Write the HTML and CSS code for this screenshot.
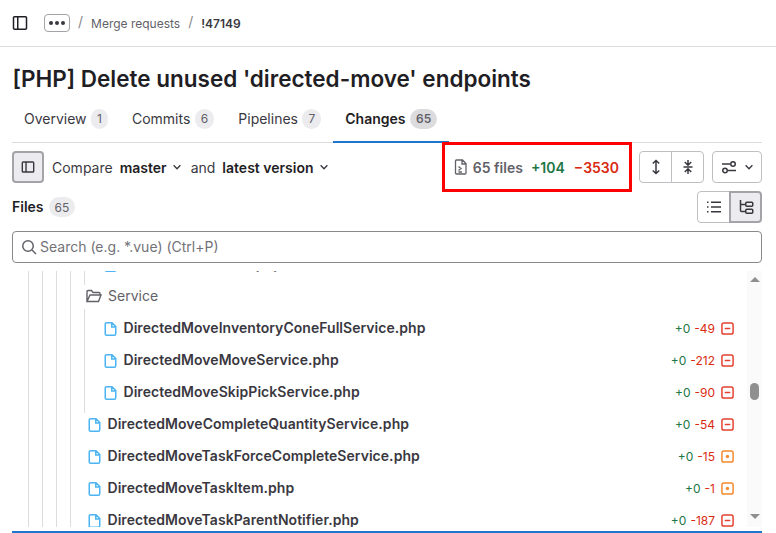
FILE: index.html
```html
<!DOCTYPE html>
<html lang="en">
<head>
    <meta charset="UTF-8">
    <title>[PHP] Delete unused 'directed-move' endpoints</title>
    <link rel="stylesheet" href="styles.css">
</head>
<body>
    <svg class="sprites" width="0" height="0">
        <symbol id="file" viewBox="0 0 16 16"><path fill="none" stroke="currentColor" stroke-width="1.5" d="M3.5 1.750h5.500l3.750 3.750v7.250a1.500 1.500 0 0 1-1.500 1.500H3.500a1.250 1.250 0 0 1-1.250-1.500V3a1.250 1.250 0 0 1 1.250-1.250zM8.750 1.750V6h4"/></symbol>
        <symbol id="chev" viewBox="0 0 16 16"><path fill="none" stroke="currentColor" stroke-width="1.800" d="M3.500 5.750L8 10.250l4.500-4.500"/></symbol>
        <symbol id="deleted" viewBox="0 0 14 14"><rect x="1" y="1" width="12" height="12" rx="2" fill="none" stroke="currentColor" stroke-width="1.600"/><path stroke="currentColor" stroke-width="1.600" d="M4 7h6"/></symbol>
        <symbol id="modified" viewBox="0 0 14 14"><rect x="1" y="1" width="12" height="12" rx="2" fill="none" stroke="currentColor" stroke-width="1.600"/><circle cx="7" cy="7" r="1.800" fill="currentColor"/></symbol>
    </svg>

    <header class="topbar">
        <svg class="icon-sidebar" width="16" height="16" viewBox="0 0 16 16"><path fill="none" stroke="#1f1e24" stroke-width="1.500" d="M2.500 1.750h11a1 1 0 0 1 1 1v10.500a1 1 0 0 1-1 1h-11a1 1 0 0 1-1-1V2.750a1 1 0 0 1 1-1zM5.750 1.750v12.500"/></svg>
        <button class="more-btn"><span></span><span></span><span></span></button>
        <span class="sep">/</span>
        <span class="crumb">Merge requests</span>
        <span class="sep">/</span>
        <span class="crumb current">!47149</span>
    </header>

    <h1>[PHP] Delete unused 'directed-move' endpoints</h1>

    <nav class="tabs">
        <div class="tab">Overview <span class="count">1</span></div>
        <div class="tab">Commits <span class="count">6</span></div>
        <div class="tab">Pipelines <span class="count">7</span></div>
        <div class="tab active">Changes <span class="count">65</span></div>
    </nav>

    <div class="toolbar">
        <button class="btn toggle selected">
            <svg width="14" height="14" viewBox="0 0 16 16"><path fill="none" stroke="#3a383f" stroke-width="1.600" d="M2.500 2.250h11a1 1 0 0 1 1 1v9.500a1 1 0 0 1-1 1h-11a1 1 0 0 1-1-1v-9.500a1 1 0 0 1 1-1zM5.750 2.250v11.500"/></svg>
        </button>
        <span class="compare">Compare</span>
        <span class="version">master <svg width="12" height="12"><use href="#chev"/></svg></span>
        <span class="compare">and</span>
        <span class="version">latest version <svg width="12" height="12"><use href="#chev"/></svg></span>

        <div class="stats">
            <svg class="stats-icon" width="16" height="16" viewBox="0 0 16 16"><path fill="none" stroke="#626168" stroke-width="1.300" d="M3.500 1h6l3.500 3.500V14a1 1 0 0 1-1 1H3.500a1 1 0 0 1-1-1V2a1 1 0 0 1 1-1zM9 1v4h4M5.500 7.500L8 9.500l-2.500 2M5.500 13H9"/></svg>
            <span class="stats-files">65 files</span>
            <span class="stats-add">+104</span>
            <span class="stats-del">−3530</span>
            <div class="highlight"></div>
        </div>

        <div class="btn-group">
            <button class="btn">
                <svg width="16" height="16" viewBox="0 0 16 16"><path fill="none" stroke="#3a383f" stroke-width="1.500" d="M8 1.500v13M4.750 4.500L8 1.500l3.250 3M4.750 11.500L8 14.500l3.250-3"/></svg>
            </button>
            <button class="btn">
                <svg width="16" height="16" viewBox="0 0 16 16"><path fill="none" stroke="#3a383f" stroke-width="1.500" d="M8 1v4.500M8 10.500V15M4.750 3L8 6.250 11.250 3M4.750 13L8 9.750 11.250 13M3.500 8h9"/></svg>
            </button>
        </div>
        <button class="btn settings">
            <svg width="16" height="16" viewBox="0 0 16 16"><path fill="none" stroke="#3a383f" stroke-width="1.500" d="M1 5h8M15 11.500H7"/><circle cx="12" cy="5" r="2.250" fill="none" stroke="#3a383f" stroke-width="1.500"/><circle cx="4" cy="11.500" r="2.250" fill="none" stroke="#3a383f" stroke-width="1.500"/></svg>
            <svg class="settings-chev" width="12" height="12"><use href="#chev"/></svg>
        </button>
    </div>

    <div class="files-head">
        <span class="files-title">Files</span>
        <span class="count">65</span>
        <div class="view-group">
            <button class="btn">
                <svg width="16" height="16" viewBox="0 0 16 16"><path fill="none" stroke="#3a383f" stroke-width="1.500" d="M5 3.250h10M5 8h10M5 12.750h10M1 3.250h1.500M1 8h1.500M1 12.750h1.500"/></svg>
            </button>
            <button class="btn selected">
                <svg width="16" height="16" viewBox="0 0 16 16"><path fill="none" stroke="#3a383f" stroke-width="1.500" d="M2.500 1v10.500a1 1 0 0 0 1 1H7M2.500 5.500H7"/><rect x="7.750" y="3.250" width="7" height="4" rx="1" fill="none" stroke="#3a383f" stroke-width="1.500"/><rect x="7.750" y="10.250" width="7" height="4" rx="1" fill="none" stroke="#3a383f" stroke-width="1.500"/></svg>
            </button>
        </div>
    </div>

    <div class="search">
        <svg width="16" height="16" viewBox="0 0 16 16"><circle cx="7" cy="7" r="5.250" fill="none" stroke="#626168" stroke-width="1.500"/><path stroke="#626168" stroke-width="1.500" d="M11 11l4 4"/></svg>
        <span class="search-text">Search (e.g. *.vue) (Ctrl+P)</span>
    </div>

    <div class="tree">
        <div class="scroller">
            <div class="guides"><i></i><i></i><i></i><i></i><i class="last"></i></div>
            <div class="rows">
                <div class="row depth-2">
                    <svg class="file-icon" width="16" height="16"><use href="#file"/></svg>
                    <span class="name">DirectedMoveAlert.php</span>
                </div>
                <div class="row folder">
                    <svg width="16" height="16" viewBox="0 0 16 16"><path fill="none" stroke="#626168" stroke-width="1.400" d="M1 13.500V3.500a1 1 0 0 1 1-1h3.500l1.500 2h6a1 1 0 0 1 1 1v1.500M1 13.500h11.500L15 7H4z"/></svg>
                    <span class="folder-name">Service</span>
                </div>
                <div class="row depth-2">
                    <svg class="file-icon" width="16" height="16"><use href="#file"/></svg>
                    <span class="name">DirectedMoveInventoryConeFullService.php</span>
                    <span class="add">+0</span><span class="del">-49</span>
                    <svg class="st-del" width="13" height="13"><use href="#deleted"/></svg>
                </div>
                <div class="row depth-2">
                    <svg class="file-icon" width="16" height="16"><use href="#file"/></svg>
                    <span class="name">DirectedMoveMoveService.php</span>
                    <span class="add">+0</span><span class="del">-212</span>
                    <svg class="st-del" width="13" height="13"><use href="#deleted"/></svg>
                </div>
                <div class="row depth-2">
                    <svg class="file-icon" width="16" height="16"><use href="#file"/></svg>
                    <span class="name">DirectedMoveSkipPickService.php</span>
                    <span class="add">+0</span><span class="del">-90</span>
                    <svg class="st-del" width="13" height="13"><use href="#deleted"/></svg>
                </div>
                <div class="row">
                    <svg class="file-icon" width="16" height="16"><use href="#file"/></svg>
                    <span class="name">DirectedMoveCompleteQuantityService.php</span>
                    <span class="add">+0</span><span class="del">-54</span>
                    <svg class="st-del" width="13" height="13"><use href="#deleted"/></svg>
                </div>
                <div class="row">
                    <svg class="file-icon" width="16" height="16"><use href="#file"/></svg>
                    <span class="name">DirectedMoveTaskForceCompleteService.php</span>
                    <span class="add">+0</span><span class="del">-15</span>
                    <svg class="st-mod" width="13" height="13"><use href="#modified"/></svg>
                </div>
                <div class="row">
                    <svg class="file-icon" width="16" height="16"><use href="#file"/></svg>
                    <span class="name">DirectedMoveTaskItem.php</span>
                    <span class="add">+0</span><span class="del">-1</span>
                    <svg class="st-mod" width="13" height="13"><use href="#modified"/></svg>
                </div>
                <div class="row">
                    <svg class="file-icon" width="16" height="16"><use href="#file"/></svg>
                    <span class="name">DirectedMoveTaskParentNotifier.php</span>
                    <span class="add">+0</span><span class="del">-187</span>
                    <svg class="st-del" width="13" height="13"><use href="#deleted"/></svg>
                </div>
            </div>
            <div class="scrollbar">
                <div class="arrow up"></div>
                <div class="thumb"></div>
                <div class="arrow down"></div>
            </div>
        </div>
    </div>
</body>
</html>
```

FILE: styles.css
```css
* {
    box-sizing: border-box;
}
html, body {
    height: 100%;
}
body {
    margin: 0;
    overflow: hidden;
    background-color: #fff;
    color: #3a383f;
    font-family: Inter, 'Noto Sans', sans-serif;
    font-size: 14px;
}
.sprites {
    position: absolute;
}
button {
    font-family: inherit;
    cursor: pointer;
}

/* top bar */
.topbar {
    display: flex;
    align-items: center;
    height: 47px;
    padding-left: 12px;
    border-bottom: 1px solid #dcdcde;
}
.more-btn {
    display: flex;
    align-items: center;
    justify-content: center;
    gap: 2px;
    width: 26px;
    height: 18px;
    margin-left: 16px;
    padding: 0;
    background: #fff;
    border: 1px solid #a4a3a8;
    border-radius: 4px;
}
.more-btn span {
    width: 4px;
    height: 4px;
    border-radius: 50%;
    background-color: #3a383f;
}
.sep {
    margin: -3px 8px 0;
    color: #89888d;
    font-size: 14px;
}
.crumb {
    color: #626168;
    font-size: 12px;
}
.crumb.current {
    color: #3a383f;
    font-weight: 600;
}

h1 {
    margin: 17px 0 0 12.500px;
    color: #1f1e24;
    font-size: 22.500px;
    font-weight: 600;
    line-height: 30px;
}

/* tabs */
.tabs {
    display: flex;
    height: 43px;
    margin: 6px 14px 0 12px;
    border-bottom: 1px solid #dcdcde;
}
.tab {
    display: flex;
    align-items: center;
    gap: 4.500px;
    height: 43px;
    padding: 0 12px 6px;
    color: #3a383f;
    font-size: 14px;
}
.tab.active {
    font-weight: 600;
    color: #1f1e24;
    border-bottom: 2px solid #1f75cb;
    padding-bottom: 4px;
}
.tab.active .count {
    background-color: #dcdcde;
    font-weight: 600;
}
.count {
    display: inline-flex;
    align-items: center;
    justify-content: center;
    height: 20px;
    padding: 0 6px;
    border-radius: 10px;
    background-color: #ececef;
    color: #626168;
    font-size: 12px;
    font-weight: 400;
}

/* compare toolbar */
.toolbar {
    display: flex;
    align-items: center;
    height: 32px;
    margin: 8px 14px 0 12px;
}
.btn {
    display: inline-flex;
    align-items: center;
    justify-content: center;
    width: 33px;
    height: 32px;
    padding: 0;
    background-color: #fff;
    border: 1px solid #bfbfc3;
    border-radius: 4px;
}
.btn.selected {
    background-color: #ececef;
    border-color: #a4a3a8;
    border-width: 2px;
}
.toggle {
    width: 32px;
}
.compare {
    margin-left: 8px;
    color: #3a383f;
    font-size: 14px;
}
.version {
    display: inline-flex;
    align-items: center;
    gap: 4px;
    margin-left: 7px;
    color: #1f1e24;
    font-size: 14px;
    font-weight: 600;
}
.version svg {
    color: #3a383f;
}
.stats {
    position: relative;
    display: flex;
    align-items: center;
    margin-left: auto;
    margin-right: 20px;
    font-size: 14px;
    font-weight: 600;
}
.stats-icon {
    margin-right: 4px;
}
.stats-files {
    color: #626168;
}
.stats-add {
    margin-left: 8px;
    color: #217645;
}
.stats-del {
    margin-left: 9px;
    color: #d92a10;
}
.highlight {
    position: absolute;
    left: -11px;
    top: -17px;
    right: -13px;
    height: 50px;
    border: 3px solid #f00;
}
.btn-group, .view-group {
    display: flex;
}
.btn-group .btn:first-child, .view-group .btn:first-child {
    border-radius: 4px 0 0 4px;
}
.btn-group .btn:last-child, .view-group .btn:last-child {
    margin-left: -1px;
    border-radius: 0 4px 4px 0;
}
.settings {
    justify-content: flex-start;
    width: 50px;
    gap: 6px;
    margin-left: 8px;
    padding-left: 8px;
}
.settings-chev {
    color: #3a383f;
}

/* files header */
.files-head {
    display: flex;
    align-items: center;
    gap: 5px;
    height: 32px;
    margin: 8px 14px 0 12px;
}
.files-title {
    margin-top: -2px;
    color: #1f1e24;
    font-weight: 600;
}
.view-group {
    margin-left: auto;
}

.search {
    display: flex;
    align-items: center;
    gap: 3px;
    height: 32px;
    margin: 8px 14px 0 12px;
    padding-left: 8px;
    border: 1px solid #89888d;
    border-radius: 4px;
    color: #737278;
    font-size: 14px;
}
.search-text {
    margin-top: -2px;
}

/* file tree */
.tree {
    height: 270px;
    margin: 0 14px 0 12px;
    padding: 8px 0 4px;
    border-bottom: 2px solid #1f75cb;
}
.scroller {
    position: relative;
    height: 256px;
    overflow: hidden;
}
.guides {
    position: absolute;
    left: 16px;
    top: 0;
    bottom: 0;
    display: flex;
    gap: 13px;
}
.guides i {
    width: 1px;
    background-color: #dcdcde;
}
.guides .last {
    background: linear-gradient(#dcdcde 0 14px, transparent 14px 38px, #dcdcde 38px 142px, transparent 142px);
}
.rows {
    margin-top: -23px;
}
.row {
    display: flex;
    align-items: center;
    height: 32px;
    padding-left: 75px;
    padding-right: 28px;
}
.row.depth-2 {
    padding-left: 91px;
}
.row.folder {
    gap: 6px;
    padding-left: 74px;
    color: #626168;
    font-size: 14px;
}
.folder-name {
    margin-top: -2px;
}
.file-icon {
    flex-shrink: 0;
    margin-top: 2px;
    margin-right: 4.500px;
    color: #4ab4f5;
}
.name {
    margin-top: -2px;
    color: #3a383f;
    font-size: 14px;
    font-weight: 600;
    letter-spacing: 0.04px;
}
.add {
    margin-left: auto;
    color: #217645;
    font-size: 12px;
}
.del {
    margin-left: 4px;
    color: #d92a10;
    font-size: 12px;
}
.st-del, .st-mod {
    margin-left: 6px;
}
.st-del {
    color: #e3412f;
}
.st-mod {
    color: #f5892f;
}
.scrollbar {
    position: absolute;
    right: 0;
    top: 0;
    bottom: 0;
    display: flex;
    flex-direction: column;
    align-items: center;
    width: 15px;
    background-color: #fafafa;
}
.arrow {
    width: 0;
    height: 0;
    border-left: 5px solid transparent;
    border-right: 5px solid transparent;
}
.arrow.up {
    margin-top: 6px;
    border-bottom: 5px solid #8f8f8f;
}
.arrow.down {
    margin-top: auto;
    margin-bottom: 8px;
    border-top: 5px solid #8f8f8f;
}
.thumb {
    width: 9px;
    height: 17px;
    margin-top: 101px;
    border-radius: 5px;
    background-color: #8f8f8f;
}
```
